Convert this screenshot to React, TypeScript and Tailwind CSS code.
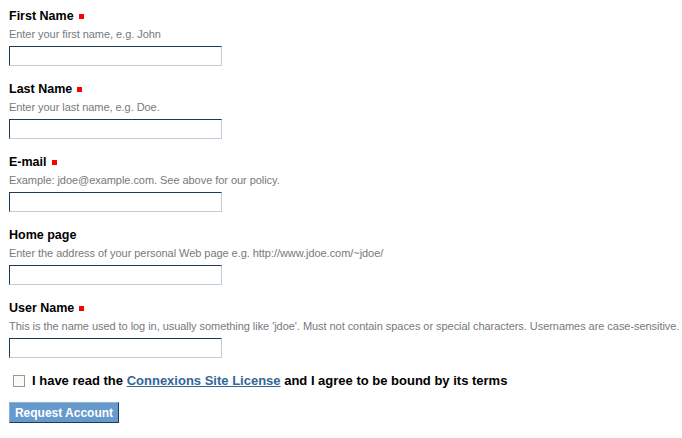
import React from 'react';

const fields = [
  { label: 'First Name', required: true, help: 'Enter your first name, e.g. John' },
  { label: 'Last Name', required: true, help: 'Enter your last name, e.g. Doe.' },
  { label: 'E-mail', required: true, help: 'Example: jdoe@example.com. See above for our policy.' },
  { label: 'Home page', required: false, help: 'Enter the address of your personal Web page e.g. http://www.jdoe.com/~jdoe/' },
  {
    label: 'User Name',
    required: true,
    help: "This is the name used to log in, usually something like 'jdoe'. Must not contain spaces or special characters. Usernames are case-sensitive.",
  },
];

export default function App() {
  return (
    <div className="w-[682px] h-[438px] overflow-hidden bg-white px-[9px] pt-[8px] font-['Liberation_Sans',Arial,sans-serif] text-black">
      {fields.map((f) => (
        <div key={f.label} className="h-[73px]">
          <div className="flex items-center h-[16px] text-[12.5px] font-bold leading-[16px]">
            {f.label}
            {f.required && <span className="ml-[5px] inline-block w-[5px] h-[5px] bg-[#ff0000]" />}
          </div>
          <div className="mt-[3px] h-[15px] whitespace-nowrap text-[11px] tracking-[-0.05px] leading-[15px] text-[#76797c]">
            {f.help}
          </div>
          <input
            type="text"
            className="mt-[4px] block w-[213px] h-[20px] bg-white border border-t-[#1c3b57] border-l-[#1c3b57] border-r-[#c0cdd9] border-b-[#c0cdd9] outline-none"
          />
        </div>
      ))}
      <div className="flex items-center h-[16px] pl-[4px] text-[13px] font-bold leading-[16px]">
        <span className="inline-block w-[12px] h-[12px] border border-[#9a9a8f] bg-[#fbfbf6] mr-[7px]" />
        <span>
          I have read the{' '}
          <a href="#" className="text-[#336699] underline">Connexions Site License</a>{' '}
          and I agree to be bound by its terms
        </span>
      </div>
      <button className="mt-[13px] block w-[110px] h-[21px] bg-[#6699cc] border border-t-[#8cb2d9] border-l-[#8cb2d9] border-r-[#1c3b57] border-b-[#1c3b57] text-white text-[12px] font-bold leading-[18px]">
        Request Account
      </button>
    </div>
  );
}
